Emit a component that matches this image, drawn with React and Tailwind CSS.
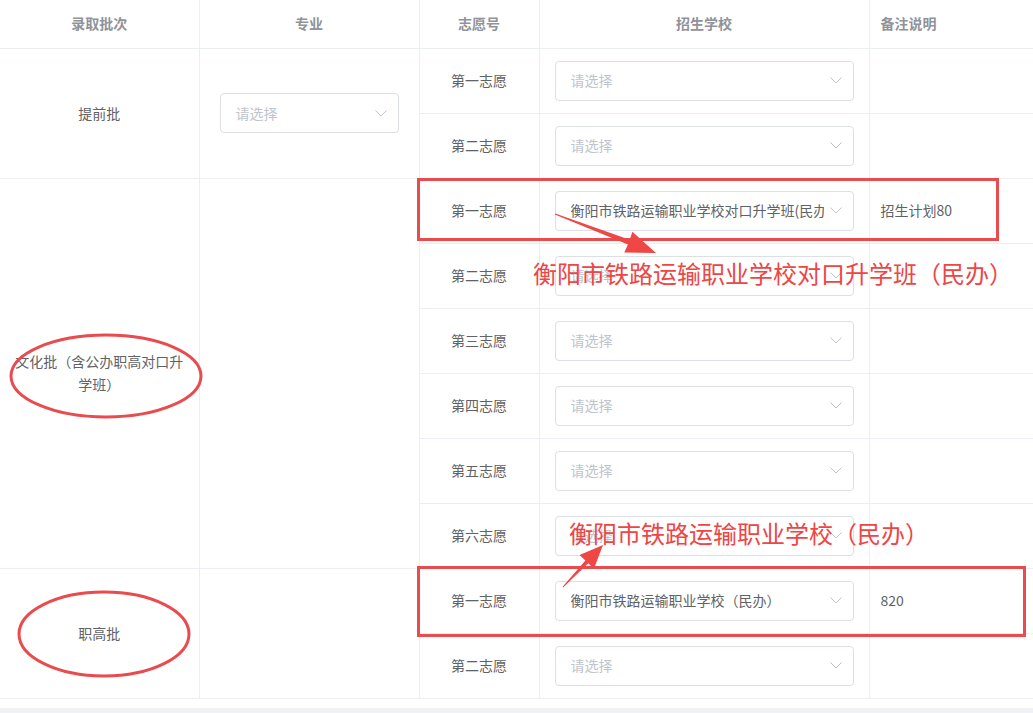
import React from "react";

const font = { fontFamily: '"Noto Sans CJK SC", "Liberation Sans", sans-serif' };

const groups = [
  {
    batch: "提前批",
    major: true,
    items: [{ no: "第一志愿" }, { no: "第二志愿" }],
  },
  {
    batch: "文化批（含公办职高对口升学班）",
    major: false,
    items: [
      { no: "第一志愿", school: "衡阳市铁路运输职业学校对口升学班(民办)", note: "招生计划80" },
      { no: "第二志愿" },
      { no: "第三志愿" },
      { no: "第四志愿" },
      { no: "第五志愿" },
      { no: "第六志愿" },
    ],
  },
  {
    batch: "职高批",
    major: false,
    items: [
      { no: "第一志愿", school: "衡阳市铁路运输职业学校（民办）", note: "820" },
      { no: "第二志愿" },
    ],
  },
];

function Chevron() {
  return (
    <svg width="12" height="7" viewBox="0 0 12 7" className="shrink-0">
      <polyline points="0.5,0.5 6,6 11.5,0.5" fill="none" stroke="#c0c4cc" strokeWidth="1" />
    </svg>
  );
}

function Select({ value }) {
  return (
    <div className="flex items-center h-[40px] w-full rounded-[4px] border border-[#dcdfe6] bg-white pl-[15px] pr-[11px]">
      <span
        className={
          "flex-1 overflow-hidden whitespace-nowrap text-[14px] " +
          (value ? "text-[#606266]" : "text-[#c0c4cc]")
        }
      >
        {value || "请选择"}
      </span>
      <span className="ml-[6px]">
        <Chevron />
      </span>
    </div>
  );
}

export default function App() {
  return (
    <div className="relative w-[1033px] h-[713px] overflow-hidden bg-white" style={font}>
      <table className="table-fixed border-collapse w-[1033px]">
        <colgroup>
          <col className="w-[199px]" />
          <col className="w-[220px]" />
          <col className="w-[120px]" />
          <col className="w-[330px]" />
          <col className="w-[164px]" />
        </colgroup>
        <thead>
          <tr className="h-[48px] text-[14px] font-bold text-[#909399]">
            <th className="border-b border-r border-[#ebeef5] font-bold">录取批次</th>
            <th className="border-b border-r border-[#ebeef5] font-bold">专业</th>
            <th className="border-b border-r border-[#ebeef5] font-bold">志愿号</th>
            <th className="border-b border-r border-[#ebeef5] font-bold">招生学校</th>
            <th className="border-b border-[#ebeef5] text-left pl-[11px] font-bold">备注说明</th>
          </tr>
        </thead>
        <tbody className="text-[14px] text-[#606266]">
          {groups.map((g, gi) =>
            g.items.map((it, i) => (
              <tr key={gi + "-" + i} className="h-[65px]">
                {i === 0 && (
                  <td
                    rowSpan={g.items.length}
                    className="border-b border-r border-[#ebeef5] px-[10px] text-center leading-[23px]"
                  >
                    {g.batch}
                  </td>
                )}
                {i === 0 && (
                  <td rowSpan={g.items.length} className="border-b border-r border-[#ebeef5] px-[20px]">
                    {g.major && <Select />}
                  </td>
                )}
                <td className="border-b border-r border-[#ebeef5] text-center">{it.no}</td>
                <td className="border-b border-r border-[#ebeef5] px-[15px]">
                  <Select value={it.school} />
                </td>
                <td className="border-b border-[#ebeef5] pl-[11px]">{it.note}</td>
              </tr>
            ))
          )}
        </tbody>
      </table>
      <div className="mt-[9px] h-[10px] bg-[#f0f2f5]" />

      {/* annotations drawn over the table */}
      <svg className="absolute left-0 top-0 pointer-events-none" width="1033" height="713">
        <rect x="418.5" y="179.5" width="579" height="60" fill="none" stroke="#e94c4f" strokeWidth="3" />
        <rect x="418.5" y="567.5" width="606" height="68" fill="none" stroke="#e94c4f" strokeWidth="3" />
        <ellipse cx="106" cy="376" rx="95" ry="41" fill="none" stroke="#e94c4f" strokeWidth="3" />
        <ellipse cx="104" cy="634" rx="85" ry="42" fill="none" stroke="#e94c4f" strokeWidth="3" />
        <polygon
          points="555.2,213.5 629.7,239.8 632.4,231.8 656,253 624.3,252.5 627.9,244.4 554.8,214.5"
          fill="#ef4646"
        />
        <polygon
          points="563.4,587.3 588.3,563.3 593.9,568.8 603,545 579.6,555 585.4,560.5 562.6,586.7"
          fill="#ef4646"
        />
      </svg>
      <div className="absolute left-[533px] top-[256px] text-[24px] leading-[34px] text-[#ee4545] whitespace-nowrap">
        衡阳市铁路运输职业学校对口升学班（民办）
      </div>
      <div className="absolute left-[569px] top-[516px] text-[24px] leading-[34px] text-[#ee4545] whitespace-nowrap">
        衡阳市铁路运输职业学校（民办）
      </div>
    </div>
  );
}
